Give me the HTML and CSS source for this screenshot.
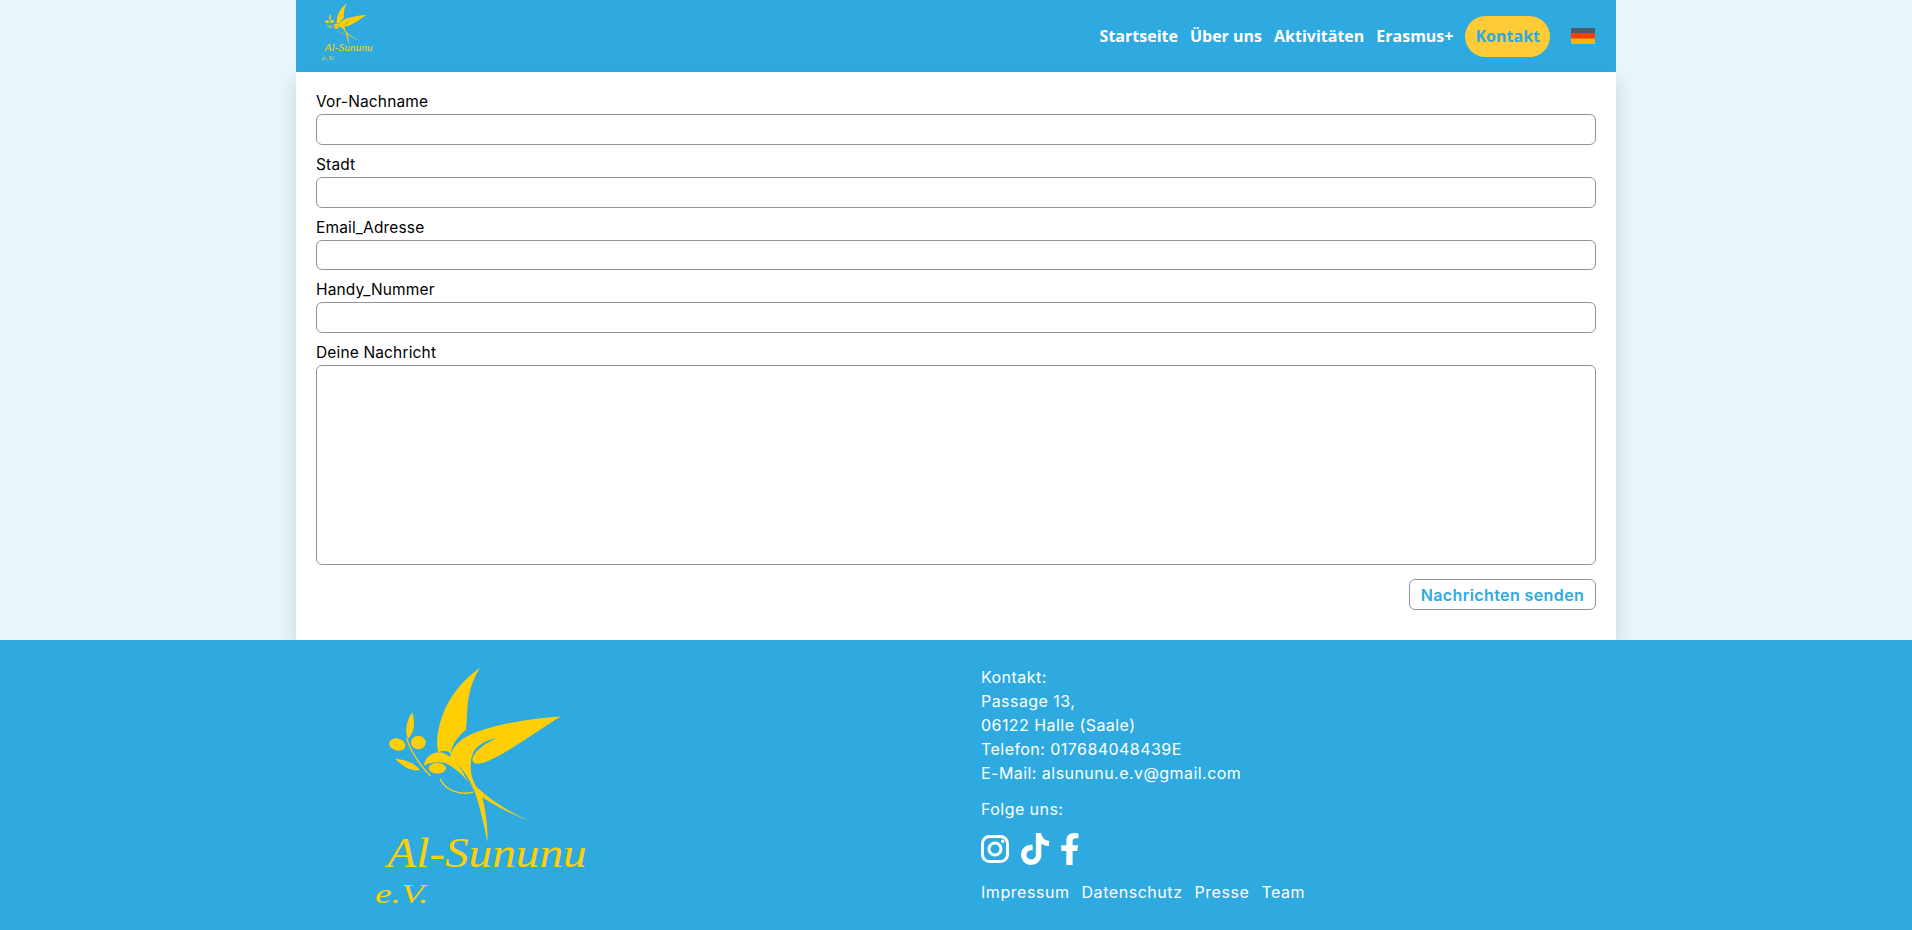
FILE: index.html
```html
<!DOCTYPE html>
<html lang="de">
<head>
<meta charset="utf-8">
<title>Kontakt – Al-Sununu e.V.</title>
<link rel="stylesheet" href="styles.css">
</head>
<body>
<div class="page-wrap">
  <header class="topbar">
    <a class="brand" href="#">
      <svg class="brand-logo" viewBox="0 0 750 837">
        <g class="logo-fill">
          <path d="M360 52C300 95 245 160 232 260C230 280 232 295 235 305C255 300 268 300 272 312C275 285 290 260 318 238C325 180 315 125 360 52Z"/>
          <path d="M603 198C500 205 380 225 320 258C290 275 272 300 270 322C300 345 325 375 345 425C400 465 470 500 525 517C450 490 390 445 350 410C330 380 326 340 340 305C355 280 385 268 410 262C375 280 345 300 337 325C335 342 355 342 375 335C450 305 530 240 603 198Z"/>
          <path d="M345 425C360 470 372 520 382 575C385 530 375 470 362 420Z"/>
          <path d="M192 345C195 320 215 305 240 305C270 310 295 340 320 385L345 425C335 400 300 360 258 338C240 332 210 335 192 345Z"/>
          <ellipse cx="232" cy="353" rx="26" ry="16"/>
          <ellipse cx="112" cy="282" rx="25" ry="18" transform="rotate(15 112 282)"/>
          <ellipse cx="175" cy="276" rx="22" ry="20"/>
          <path d="M157 185C135 215 135 250 145 265C165 240 165 215 157 185Z"/>
          <path d="M105 325C130 350 160 365 180 358C165 340 140 328 105 325Z"/>
          <text class="logo-script" x="82" y="648" font-size="128" textLength="598" lengthAdjust="spacingAndGlyphs">Al-Sununu</text>
          <text class="logo-script" x="45" y="757" font-size="84" textLength="160" lengthAdjust="spacingAndGlyphs">e.V.</text>
        </g>
        <g class="logo-line">
          <path d="M140 262C150 300 180 345 212 377"/>
          <path d="M240 385C255 420 300 435 340 425"/>
        </g>
      </svg>
    </a>
    <nav class="nav">
      <a href="#">Startseite</a>
      <a href="#">Über uns</a>
      <a href="#">Aktivitäten</a>
      <a href="#">Erasmus+</a>
      <a class="nav-active" href="#">Kontakt</a>
      <svg class="flag" viewBox="0 0 24 16" aria-label="Deutsch">
        <rect class="flag-black" width="24" height="5.4"/>
        <rect class="flag-red" y="5.3" width="24" height="5.4"/>
        <rect class="flag-gold" y="10.6" width="24" height="5.4"/>
      </svg>
    </nav>
  </header>

  <main class="main">
    <form class="form">
      <div class="field"><label for="f1">Vor-Nachname</label><input id="f1" type="text"></div>
      <div class="field"><label for="f2">Stadt</label><input id="f2" type="text"></div>
      <div class="field"><label for="f3">Email_Adresse</label><input id="f3" type="text"></div>
      <div class="field"><label for="f4">Handy_Nummer</label><input id="f4" type="text"></div>
      <div class="field"><label for="f5">Deine Nachricht</label><textarea id="f5"></textarea></div>
      <div class="actions"><button class="send" type="button">Nachrichten senden</button></div>
    </form>
  </main>
</div>

<footer class="footer">
  <div class="footer-inner">
    <div class="footer-left">
      <svg class="footer-logo" viewBox="0 0 750 837">
        <g class="logo-fill">
          <path d="M360 52C300 95 245 160 232 260C230 280 232 295 235 305C255 300 268 300 272 312C275 285 290 260 318 238C325 180 315 125 360 52Z"/>
          <path d="M603 198C500 205 380 225 320 258C290 275 272 300 270 322C300 345 325 375 345 425C400 465 470 500 525 517C450 490 390 445 350 410C330 380 326 340 340 305C355 280 385 268 410 262C375 280 345 300 337 325C335 342 355 342 375 335C450 305 530 240 603 198Z"/>
          <path d="M345 425C360 470 372 520 382 575C385 530 375 470 362 420Z"/>
          <path d="M192 345C195 320 215 305 240 305C270 310 295 340 320 385L345 425C335 400 300 360 258 338C240 332 210 335 192 345Z"/>
          <ellipse cx="232" cy="353" rx="26" ry="16"/>
          <ellipse cx="112" cy="282" rx="25" ry="18" transform="rotate(15 112 282)"/>
          <ellipse cx="175" cy="276" rx="22" ry="20"/>
          <path d="M157 185C135 215 135 250 145 265C165 240 165 215 157 185Z"/>
          <path d="M105 325C130 350 160 365 180 358C165 340 140 328 105 325Z"/>
          <text class="logo-script" x="82" y="648" font-size="128" textLength="598" lengthAdjust="spacingAndGlyphs">Al-Sununu</text>
          <text class="logo-script" x="45" y="757" font-size="84" textLength="160" lengthAdjust="spacingAndGlyphs">e.V.</text>
        </g>
        <g class="logo-line">
          <path d="M140 262C150 300 180 345 212 377"/>
          <path d="M240 385C255 420 300 435 340 425"/>
        </g>
      </svg>
    </div>
    <div class="footer-right">
      <p class="contact">Kontakt:<br>Passage 13,<br>06122 Halle (Saale)<br>Telefon: 017684048439E<br>E-Mail: alsununu.e.v@gmail.com</p>
      <p class="follow">Folge uns:</p>
      <div class="social">
        <svg class="ic-insta" viewBox="0 0 28 28"><rect class="insta-line" x="1.5" y="1.5" width="25" height="25" rx="7"/><circle class="insta-line" cx="14" cy="14" r="6"/><circle class="insta-dot" cx="21.7" cy="6.3" r="1.7"/></svg>
        <svg class="ic-tiktok" viewBox="0 0 448 512"><path d="M448,209.91a210.06,210.06,0,0,1-122.77-39.25V349.38A162.55,162.55,0,1,1,185,188.31V278.2a74.62,74.62,0,1,0,52.23,71.18V0l88,0a121.18,121.18,0,0,0,1.86,22.17h0A122.18,122.18,0,0,0,381,102.39a121.43,121.43,0,0,0,67,20.14Z"/></svg>
        <svg class="ic-fb" viewBox="22 0 298 512"><path d="M279.14 288l14.22-92.66h-88.91v-60.13c0-25.35 12.42-50.06 52.24-50.06h40.42V6.26S260.43 0 225.36 0c-73.22 0-121.08 44.38-121.08 124.72v70.62H22.89V288h81.39v224h100.17V288z"/></svg>
      </div>
      <div class="footer-links">
        <a href="#">Impressum</a><a href="#">Datenschutz</a><a href="#">Presse</a><a href="#">Team</a>
      </div>
    </div>
  </div>
</footer>
</body>
</html>
```
FILE: styles.css
```css
* { box-sizing: border-box; }
html, body { margin: 0; padding: 0; }
body {
  background: #e8f6fc;
  font-family: Inter, "Open Sans", sans-serif;
  font-size: 16px;
  line-height: 24px;
  letter-spacing: .45px;
  color: #000;
  height: 930px;
  overflow: hidden;
}
a { color: inherit; text-decoration: none; }

.logo-fill { fill: #ffcf06; }
.logo-line { fill: none; stroke: #ffcf06; stroke-width: 4; }
.logo-script { font-family: "Liberation Serif", serif; font-style: italic; letter-spacing: 0; }

.page-wrap { width: 1320px; margin: 0 auto; }

.topbar {
  height: 72px;
  background: #2eaae1;
  display: flex;
  align-items: center;
  justify-content: space-between;
  padding: 0 21px 0 22px;
}
.brand { display: block; align-self: flex-start; margin-top: -1px; }
.brand-logo { display: block; width: 60.5px; height: 67.5px; }
.nav {
  display: flex;
  align-items: center;
  gap: 12px;
  font-family: "Open Sans", sans-serif;
  font-weight: 700;
  font-size: 16px;
  letter-spacing: 0;
  color: #fff;
}
.nav-active {
  background: #ffcb37;
  color: #2eaae1;
  height: 41px;
  line-height: 41px;
  padding: 0 10px;
  border-radius: 20.5px;
}
.flag { width: 24px; height: 16px; margin-left: 9px; }
.flag-black { fill: #4e5c68; }
.flag-red { fill: #ff3d00; }
.flag-gold { fill: #ffb300; }

.main {
  height: 568px;
  background: #fff;
  padding: 18.3px 20px 0;
  box-shadow: 0 8px 16px rgba(0, 0, 0, .15);
}
.form { display: flex; flex-direction: column; gap: 8px; }
.field { display: flex; flex-direction: column; }
.field label { height: 24px; font-size: 15.5px; letter-spacing: .15px; }
.field input, .field textarea {
  display: block;
  width: 100%;
  height: 30.67px;
  border: 1px solid #949494;
  border-radius: 6px;
  background: #fff;
  resize: none;
  padding: 0;
}
.field textarea { height: 200px; }
.actions { display: flex; justify-content: flex-end; margin-top: 6.3px; }
.send {
  height: 31px;
  width: 187px;
  padding: 0;
  border: 1px solid #949494;
  border-radius: 6px;
  background: #fff;
  color: #2eaae1;
  font: 600 16px/24px Inter, sans-serif;
  letter-spacing: .4px;
}

.footer {
  height: 290px;
  background: #2eaae1;
  color: #fff;
}
.footer-inner {
  width: 1320px;
  margin: 0 auto;
  display: grid;
  grid-template-columns: 660px 660px;
}
.footer-left { padding: 10px 0 0 64px; }
.footer-logo { display: block; width: 250px; height: 280px; }
.footer-right { padding: 25px 0 0 25px; }
.contact { margin: 0 0 12px; }
.follow { margin: 0 0 12px; }
.social { display: flex; align-items: center; gap: 12px; height: 32px; }
.social svg { display: block; fill: #fff; }
.ic-insta { width: 28px; height: 28px; }
.ic-tiktok { width: 28px; height: 32px; }
.ic-fb { width: 19px; height: 32px; }
.insta-line { fill: none; stroke: #fff; stroke-width: 3; }
.insta-dot { fill: #fff; }
.footer-links { display: flex; gap: 12px; margin-top: 15px; letter-spacing: .55px; }
```
